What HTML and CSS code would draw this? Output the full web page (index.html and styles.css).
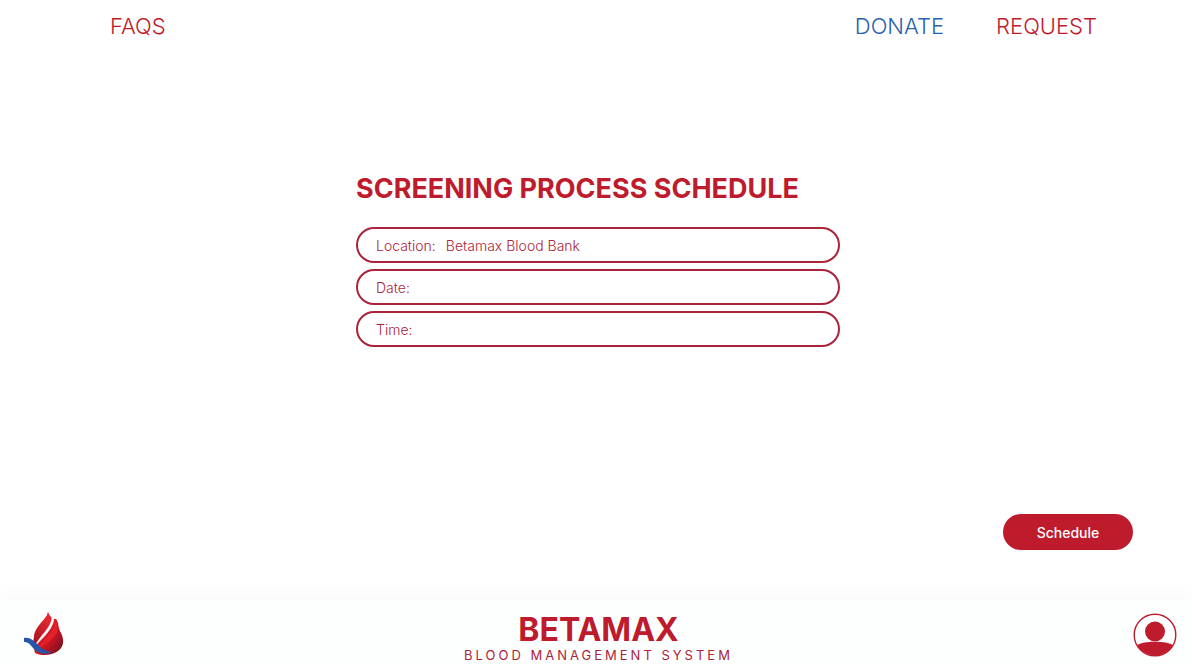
FILE: index.html
```html
<!DOCTYPE html>
<html lang="en">
<head>
  <meta charset="utf-8">
  <meta name="viewport" content="width=device-width, initial-scale=1">
  <title>Betamax – Screening Process Schedule</title>
  <link rel="stylesheet" href="styles.css">
</head>
<body>
  <nav class="topnav">
    <a class="topnav-link" href="#faqs">FAQS</a>
    <div class="topnav-group">
      <a class="topnav-link topnav-link-active" href="#donate">DONATE</a>
      <a class="topnav-link" href="#request">REQUEST</a>
    </div>
  </nav>

  <main class="content">
    <form class="schedule">
      <div class="schedule-panel">
        <h1 class="schedule-title">SCREENING PROCESS SCHEDULE</h1>
        <div class="fields">
          <div class="field">
            <label for="location">Location:</label>
            <input id="location" type="text" value="Betamax Blood Bank">
          </div>
          <div class="field">
            <label for="date">Date:</label>
            <input id="date" type="text">
          </div>
          <div class="field">
            <label for="time">Time:</label>
            <input id="time" type="text">
          </div>
        </div>
      </div>
      <button class="submit" type="submit">Schedule</button>
    </form>
  </main>

  <footer class="footer">
    <a class="logo" href="#home" aria-label="Betamax home">
      <svg width="44" height="48" viewBox="0 0 44 48" aria-hidden="true">
        <defs>
          <linearGradient id="drop" x1="0" y1="0" x2="1" y2="1">
            <stop offset="0.2" stop-color="#e5202b"/>
            <stop offset="0.6" stop-color="#c91522"/>
            <stop offset="1" stop-color="#65101f"/>
          </linearGradient>
          <linearGradient id="leaf" x1="0.7" y1="0" x2="0.3" y2="1">
            <stop offset="0" stop-color="#ef2932"/>
            <stop offset="1" stop-color="#a51421"/>
          </linearGradient>
        </defs>
        <path d="M28 1C27 9 15 14 14 26C13 33 14 38 15 42C20 45 32 45 38 40C45 35 44 27 40 20C38 16 39 12 36 8C33 8 30 6 28 1Z" fill="url(#drop)"/>
        <path d="M28 1C27 9 15 14 14 26C13 31 14 34 15 36C19 28 28 20 31 8C29 6 28 4 28 1Z" fill="url(#leaf)"/>
        <path d="M34 15C31 24 20 31 16 41C23 34 32 30 37 22C38 18 37 13 36 8Z" fill="#e42029"/>
        <path d="M32 6C32 17 19 25 14 37C19 29 33 20 34 7Z" fill="#fff" stroke="#fff" stroke-width="0.6"/>
        <path d="M4 27C10 26 14 30 18 34C22 38 27 41 32 41C26 44 18 43 13 37C10 33 8 31 4 31Z" fill="#2457a7"/>
      </svg>
    </a>
    <div class="brand">
      <div class="brand-name">BETAMAX</div>
      <div class="brand-tagline">BLOOD MANAGEMENT SYSTEM</div>
    </div>
    <button class="profile" type="button" aria-label="Profile">
      <svg width="44" height="44" viewBox="0 0 44 44" aria-hidden="true">
        <circle cx="22" cy="22" r="20.8" fill="#fff" stroke="#be1b2d" stroke-width="1.4"/>
        <circle cx="22" cy="18.500" r="10" fill="#be1b2d"/>
        <path d="M4 32C9 29.800 13 28.800 22 28.800S35 29.800 40 32A20.800 20.800 0 0 1 4 32Z" fill="#be1b2d"/>
      </svg>
    </button>
  </footer>
</body>
</html>
```
FILE: styles.css
```css
:root {
  --red: #be1b2d;
  --field-red: #ab2439;
  --blue: #2a5fae;
}

* {
  box-sizing: border-box;
}

body {
  display: flex;
  flex-direction: column;
  min-height: 100vh;
  margin: 0;
  background: #fff;
  color: var(--red);
  font-family: Inter, "Open Sans", sans-serif;
}

.topnav {
  display: flex;
  justify-content: space-between;
  padding: 12px 95px 12px 110px;
}

.topnav-group {
  display: flex;
  gap: 52px;
}

.topnav-link {
  color: var(--red);
  font-size: 22px;
  font-weight: 300;
  line-height: 28px;
  text-decoration: none;
}

.topnav-link-active {
  color: var(--blue);
}

.content {
  display: flex;
  flex: 1;
  padding: 120px 59px 50px 63px;
}

.schedule {
  display: flex;
  flex: 1;
  flex-direction: column;
  justify-content: space-between;
}

.schedule-panel {
  width: 100%;
  max-width: 484px;
  margin: 0 auto;
}

.schedule-title {
  margin: 0 0 21px;
  font-size: 27px;
  font-weight: 700;
  line-height: 34px;
}

.fields {
  display: flex;
  flex-direction: column;
  gap: 6px;
}

.field {
  display: flex;
  align-items: center;
  gap: 10px;
  height: 36px;
  padding: 0 18px;
  border: 2px solid var(--field-red);
  border-radius: 18px;
  color: var(--field-red);
  font-size: 14px;
  font-weight: 300;
}

.field input {
  flex: 1;
  min-width: 0;
  padding: 0;
  border: 0;
  outline: 0;
  background: none;
  color: inherit;
  font: inherit;
}

.submit {
  align-self: flex-end;
  width: 130px;
  height: 36px;
  border: 0;
  border-radius: 18px;
  background: var(--red);
  color: #fff;
  font: 500 14px Inter, "Open Sans", sans-serif;
}

.footer {
  display: grid;
  grid-template-columns: 1fr auto 1fr;
  align-items: center;
  height: 64px;
  padding: 6px 15px 0 20px;
  background: #fdfffe;
  box-shadow: 0 -4px 20px rgba(20, 70, 60, 0.04);
}

.logo {
  justify-self: start;
  display: flex;
}

.brand {
  align-self: end;
  text-align: center;
}

.brand-name {
  font-size: 32px;
  font-weight: 700;
  line-height: 32px;
}

.brand-tagline {
  color: var(--field-red);
  font-size: 13px;
  font-weight: 400;
  letter-spacing: 3px;
  line-height: 18px;
}

.profile {
  justify-self: end;
  display: flex;
  padding: 0;
  border: 0;
  background: none;
}
```
